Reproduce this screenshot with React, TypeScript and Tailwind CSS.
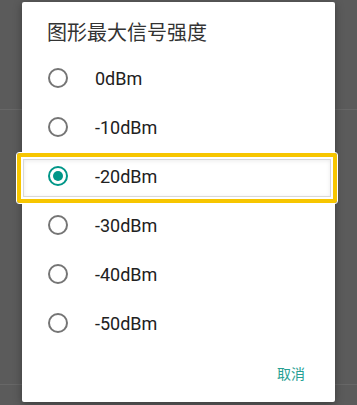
import React from 'react';

const options = ['0dBm', '-10dBm', '-20dBm', '-30dBm', '-40dBm', '-50dBm'];

function Radio({ checked }: { checked: boolean }) {
  return (
    <div
      className={`w-[20px] h-[20px] rounded-full border-2 flex items-center justify-center shrink-0 ${
        checked ? 'border-[#009688]' : 'border-[#757575]'
      }`}
    >
      {checked && <div className="w-[10px] h-[10px] rounded-full bg-[#009688]" />}
    </div>
  );
}

export default function App() {
  const selected = '-20dBm';

  return (
    <div
      className="relative w-[357px] h-[405px] bg-[#5b5b5b] overflow-hidden"
      style={{ fontFamily: 'Roboto, "Noto Sans CJK SC", sans-serif' }}
    >
      {/* 背景のリスト（ダイアログの下） */}
      <div className="flex flex-col">
        <div className="h-[110px] border-b border-[#676767]" />
        <div className="h-[275px] border-b border-[#676767]" />
      </div>

      {/* ダイアログ */}
      <div className="absolute left-[22px] top-[2px] w-[313px] h-[400px] bg-white rounded-[2px] shadow-[0_2px_8px_rgba(0,0,0,0.35)] flex flex-col">
        <div className="pt-[17px] pl-[25px] text-[20px] leading-[28px] text-[#333333]">
          图形最大信号强度
        </div>

        <div className="mt-[6.5px] flex flex-col">
          {options.map((opt) => (
            <div key={opt} className="relative h-[49px] flex items-center pl-[26px]">
              <Radio checked={opt === selected} />
              <span className="ml-[27px] text-[18px] text-[#212121]">{opt}</span>
              {opt === selected && (
                <div className="absolute left-[-5px] right-[-2px] top-[1.5px] h-[50px] rounded-[2px] border-[4px] border-[#f7c600] outline outline-1 outline-white shadow-[inset_0_0_0_2px_#ffffff,inset_0_0_0_3px_#d8d8d8,inset_0_1px_4px_3px_rgba(0,0,0,0.08)]" />
              )}
            </div>
          ))}
        </div>

        <div className="flex justify-end pr-[30px] pt-[16px]">
          <span className="text-[14px] leading-[21px] text-[#26a093]">取消</span>
        </div>
      </div>
    </div>
  );
}
